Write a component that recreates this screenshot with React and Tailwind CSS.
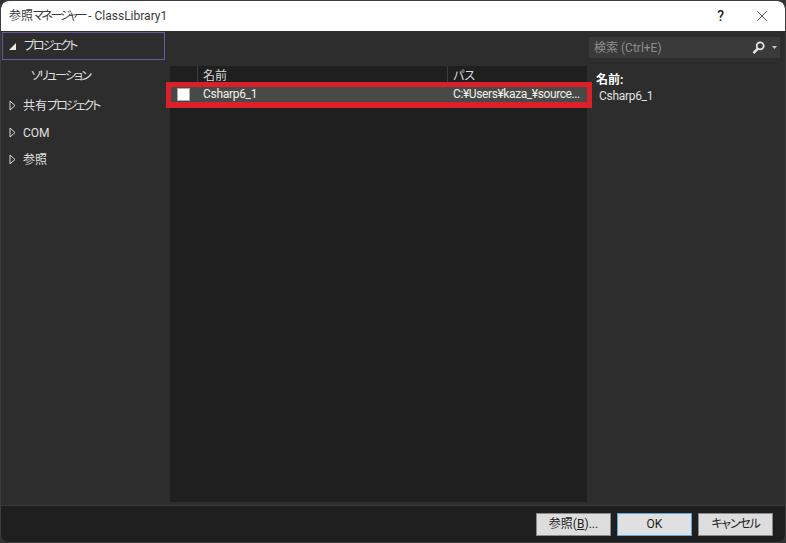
import { X } from "lucide-react"

const font = { fontFamily: 'Roboto, "Noto Sans CJK JP", sans-serif' }

function Tree({ open, children }) {
  return (
    <span className="flex items-center">
      <span className="flex w-[21px] justify-center">
        {open ? (
          <svg width="9" height="9" viewBox="0 0 9 9" className="-ml-[2px]">
            <path d="M8 1 V8 H1 Z" fill="#e8e8e8" />
          </svg>
        ) : (
          <svg width="7" height="11" viewBox="0 0 7 11">
            <path d="M1 1 L6 5.5 L1 10 Z" fill="none" stroke="#dcdcdc" strokeWidth="1" />
          </svg>
        )}
      </span>
      {children}
    </span>
  )
}

function Btn({ children, primary }) {
  return (
    <button
      type="button"
      className={`flex h-[23px] w-[75px] items-center justify-center border text-xs text-[#1e1e1e] ${
        primary ? "border-[#58a8e0] bg-[#e0e0e0]" : "border-[#8a8a8a] bg-[#dddddd]"
      }`}
    >
      {children}
    </button>
  )
}

export default function App() {
  return (
    <div className="h-[543px] w-[786px] bg-[#333333]">
      <div
        className="relative flex h-[543px] w-[786px] flex-col overflow-hidden rounded-[8px] border border-[#3d3d3d] bg-[#2d2d2d] text-xs text-[#e0e0e0] [font-feature-settings:'palt']"
        style={font}
      >
        <header className="flex h-[30px] shrink-0 items-center justify-between rounded-t-[8px] bg-white pl-[8px] pr-[14px] text-[#3a3a3a]">
          <span>
            参照<span className="tracking-[-2.4px]">マネージャー</span>
            <span className="ml-[3px]">- ClassLibrary1</span>
          </span>
          <div className="flex items-center gap-[29px] text-[#222]">
            <span className="text-sm font-medium">?</span>
            <X size={18} strokeWidth={1} />
          </div>
        </header>

        <div className="flex min-h-0 flex-1">
          <nav className="w-[169px] shrink-0 pt-[1px]">
            <div className="ml-[1px] flex h-[28px] w-[163px] items-center border border-[#6a5a9c]">
              <Tree open>
                <span className="tracking-[-2px]">プロジェクト</span>
              </Tree>
            </div>
            <div className="flex h-[32px] items-center pl-[30px] tracking-[-1.9px]">ソリューション</div>
            <div className="flex h-[27px] items-center pl-[1px]">
              <Tree>
                共有<span className="tracking-[-2px]">プロジェクト</span>
              </Tree>
            </div>
            <div className="flex h-[27px] items-center pl-[1px]">
              <Tree>COM</Tree>
            </div>
            <div className="flex h-[27px] items-center pl-[1px]">
              <Tree>参照</Tree>
            </div>
          </nav>

          <main className="mt-[35px] flex h-[436px] w-[417px] shrink-0 flex-col bg-[#1f1f1f]">
            <div className="flex h-[21px] text-[#d8d8d8]">
              <div className="h-[16px] w-[28px] border-r border-[#3a3a3a]" />
              <div className="h-[16px] w-[250px] border-r border-[#3a3a3a] pl-[5px] pt-[2px]">名前</div>
              <div className="flex-1 pl-[5px] pt-[2px]">パス</div>
            </div>
            <div className="flex h-[15px] items-center bg-[#484a48] pb-[1px] text-[#f0f0f0]">
              <div className="flex w-[28px] items-center pl-[7px]">
                <span className="size-[13px] border border-[#aaaaaa] bg-white" />
              </div>
              <div className="w-[250px] pl-[5px] tracking-[-0.3px]">Csharp6_1</div>
              <div className="flex-1 whitespace-nowrap pl-[5px] tracking-[-0.4px]">C:¥Users¥kaza_¥source...</div>
            </div>
          </main>

          <aside className="flex-1 pl-[2px] pr-[5px]">
            <div className="mt-[6px] flex h-[21px] items-center justify-between bg-[#3a3a3a] pl-[5px] pr-[3px] text-[#8e8e8e]">
              <span>検索 (Ctrl+E)</span>
              <span className="flex items-center gap-[7px]">
                <svg width="13" height="14" viewBox="0 0 13 14" fill="none">
                  <circle cx="8.2" cy="4.8" r="3.5" stroke="#e4e4e4" strokeWidth="1.8" />
                  <path d="M5.5 7.8 L1.5 12.2" stroke="#e4e4e4" strokeWidth="2.6" />
                </svg>
                <svg width="5" height="3" viewBox="0 0 5 3">
                  <path d="M0 0 H5 L2.5 3 Z" fill="#c8c8c8" />
                </svg>
              </span>
            </div>
            <div className="mt-[14px] pl-[7px] font-bold leading-[16px] text-white">名前:</div>
            <div className="pl-[10px] leading-[17px] tracking-[-0.3px]">Csharp6_1</div>
          </aside>
        </div>

        <footer className="flex h-[37px] shrink-0 items-center justify-end gap-[6px] border-t border-[#3a3a3a] bg-[#1f1f1f] pr-[12px]">
          <Btn>
            <span>
              参照(<span className="underline">B</span>)...
            </span>
          </Btn>
          <Btn primary>OK</Btn>
          <Btn>
            <span className="tracking-[-1.2px]">キャンセル</span>
          </Btn>
        </footer>

        {/* 赤枠の注釈 */}
        <div className="absolute left-[165px] top-[81px] h-[26px] w-[426px] border-x-[5px] border-b-[6px] border-t-[5px] border-[#dc2029]" />
      </div>
    </div>
  )
}
